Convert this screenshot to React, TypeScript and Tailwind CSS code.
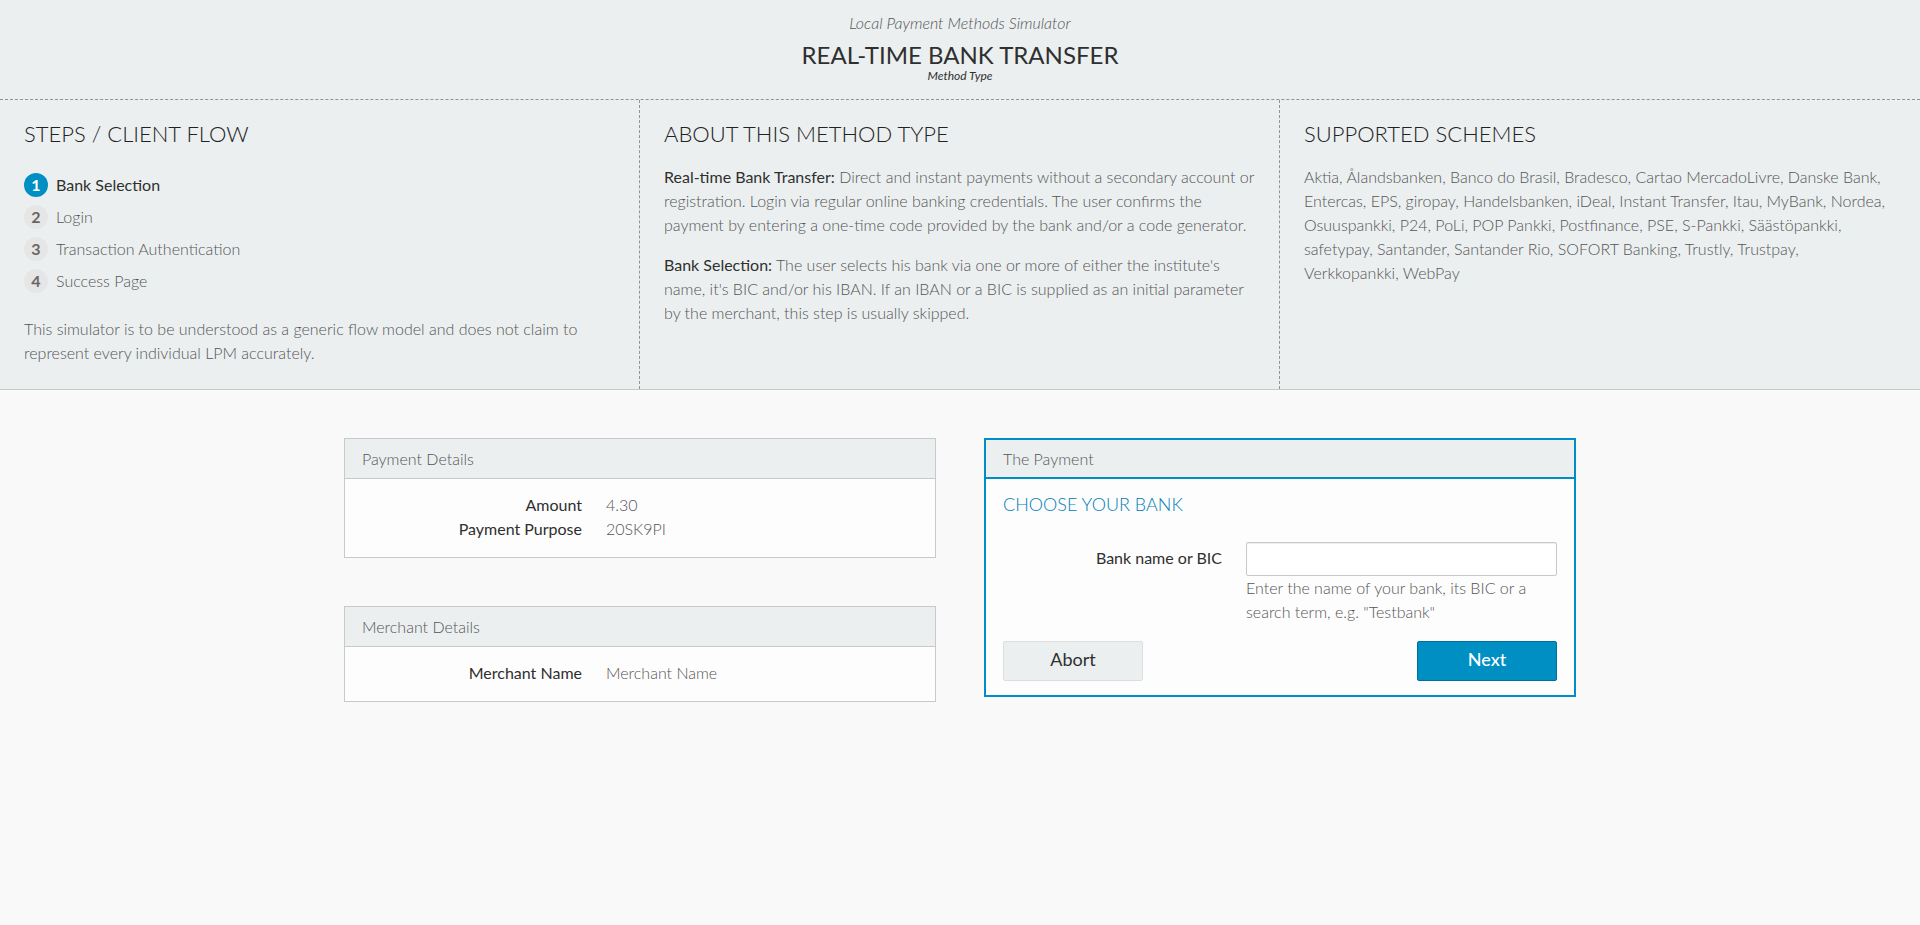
import type { ReactNode } from "react";

const steps = ["Bank Selection", "Login", "Transaction Authentication", "Success Page"];
const activeStep = 0;

const schemes =
  "Aktia, Ålandsbanken, Banco do Brasil, Bradesco, Cartao MercadoLivre, Danske Bank, Entercas, EPS, giropay, Handelsbanken, iDeal, Instant Transfer, Itau, MyBank, Nordea, Osuuspankki, P24, PoLi, POP Pankki, Postfinance, PSE, S-Pankki, Säästöpankki, safetypay, Santander, Santander Rio, SOFORT Banking, Trustly, Trustpay, Verkkopankki, WebPay";

function InfoColumn({ title, children }: { title: string; children: ReactNode }) {
  return (
    <section className="border-r border-dashed border-[#8f9595] px-6 pt-5 pb-6 last:border-r-0">
      <h2 className="text-[22px] leading-7 uppercase text-[#222]">{title}</h2>
      {children}
    </section>
  );
}

function DetailsCard({ title, rows }: { title: string; rows: [string, string][] }) {
  return (
    <section className="border border-[#c8caca] bg-[#fdfdfd]">
      <h3 className="border-b border-[#c8caca] bg-[#ebeff0] px-[17px] pt-2 pb-[7px]">{title}</h3>
      <dl className="px-[17px] pt-[14px] pb-4">
        {rows.map(([label, value]) => (
          <div key={label} className="flex gap-6">
            <dt className="w-[220px] shrink-0 text-right font-normal text-[#2f2f2f]">{label}</dt>
            <dd>{value}</dd>
          </div>
        ))}
      </dl>
    </section>
  );
}

export default function App() {
  return (
    <div className="min-h-screen bg-[#f9f9f9] font-['Lato',sans-serif] text-base leading-6 font-light text-[#555]">
      <header className="border-b border-[#c8caca] bg-[#ebeff0]">
        <div className="border-b border-dashed border-[#8f9595] pt-[11px] pb-4 text-center">
          <p className="italic">Local Payment Methods Simulator</p>
          <h1 className="mt-1 text-2xl leading-8 font-normal uppercase text-[#2f2f2f]">Real-time Bank Transfer</h1>
          <p className="-mt-[3px] text-xs leading-[15px] font-normal italic text-[#2f2f2f]">Method Type</p>
        </div>
        <div className="grid grid-cols-3">
          <InfoColumn title="Steps / Client Flow">
            <ol className="mt-[25px] flex flex-col gap-2">
              {steps.map((step, i) => (
                <li key={step} className="flex items-center gap-2">
                  <span
                    className={
                      i === activeStep
                        ? "size-6 rounded-full bg-[#008fc3] text-center font-bold text-white"
                        : "size-6 rounded-full bg-[#e6e6e6] text-center font-bold text-[#666]"
                    }
                  >
                    {i + 1}
                  </span>
                  <span className={i === activeStep ? "font-normal text-[#2f2f2f]" : ""}>{step}</span>
                </li>
              ))}
            </ol>
            <p className="mt-6">
              This simulator is to be understood as a generic flow model and does not claim to represent every
              individual LPM accurately.
            </p>
          </InfoColumn>
          <InfoColumn title="About this Method Type">
            <p className="mt-[17px]">
              <strong className="font-normal text-[#2f2f2f]">Real-time Bank Transfer:</strong> Direct and instant
              payments without a secondary account or registration. Login via regular online banking credentials. The
              user confirms the payment by entering a one-time code provided by the bank and/or a code generator.
            </p>
            <p className="mt-4">
              <strong className="font-normal text-[#2f2f2f]">Bank Selection:</strong> The user selects his bank via one
              or more of either the institute's name, it's BIC and/or his IBAN. If an IBAN or a BIC is supplied as an
              initial parameter by the merchant, this step is usually skipped.
            </p>
          </InfoColumn>
          <InfoColumn title="Supported Schemes">
            <p className="mt-[17px]">{schemes}</p>
          </InfoColumn>
        </div>
      </header>

      <main className="mx-auto grid max-w-[1232px] grid-cols-2 items-start gap-12 py-12">
        <div className="flex flex-col gap-12">
          <DetailsCard
            title="Payment Details"
            rows={[
              ["Amount", "4.30"],
              ["Payment Purpose", "20SK9PI"],
            ]}
          />
          <DetailsCard title="Merchant Details" rows={[["Merchant Name", "Merchant Name"]]} />
        </div>

        <section className="border-2 border-[#008fc3] bg-[#fdfdfd]">
          <h3 className="border-b-2 border-[#008fc3] bg-[#ebeff0] px-[17px] pt-[7px] pb-1.5">The Payment</h3>
          <form className="px-[17px] pt-[13px] pb-[14px]" onSubmit={(e) => e.preventDefault()}>
            <h4 className="text-lg leading-6 uppercase text-[#0080b8]">Choose your bank</h4>
            <div className="mt-[26px] flex gap-6">
              <label htmlFor="bank" className="w-[219px] shrink-0 pt-1 text-right font-normal text-[#2f2f2f]">
                Bank name or BIC
              </label>
              <div className="min-w-0 flex-1">
                <input
                  id="bank"
                  type="text"
                  aria-describedby="bank-help"
                  className="block h-[34px] w-full rounded-xs border border-[#c8caca] bg-white px-2 shadow-[inset_0_1px_1px_rgba(0,0,0,0.075)]"
                />
                <p id="bank-help">Enter the name of your bank, its BIC or a search term, e.g. "Testbank"</p>
              </div>
            </div>
            <div className="mt-[17px] flex justify-between">
              <button
                type="button"
                className="h-10 w-[140px] rounded-xs border border-[#dcdfdf] bg-[#ebeff0] pb-1 text-lg font-normal text-[#2f2f2f]"
              >
                Abort
              </button>
              <button
                type="submit"
                className="h-10 w-[140px] rounded-xs border border-[#00709a] bg-[#008fc3] pb-1 text-lg font-medium text-white"
              >
                Next
              </button>
            </div>
          </form>
        </section>
      </main>
    </div>
  );
}
